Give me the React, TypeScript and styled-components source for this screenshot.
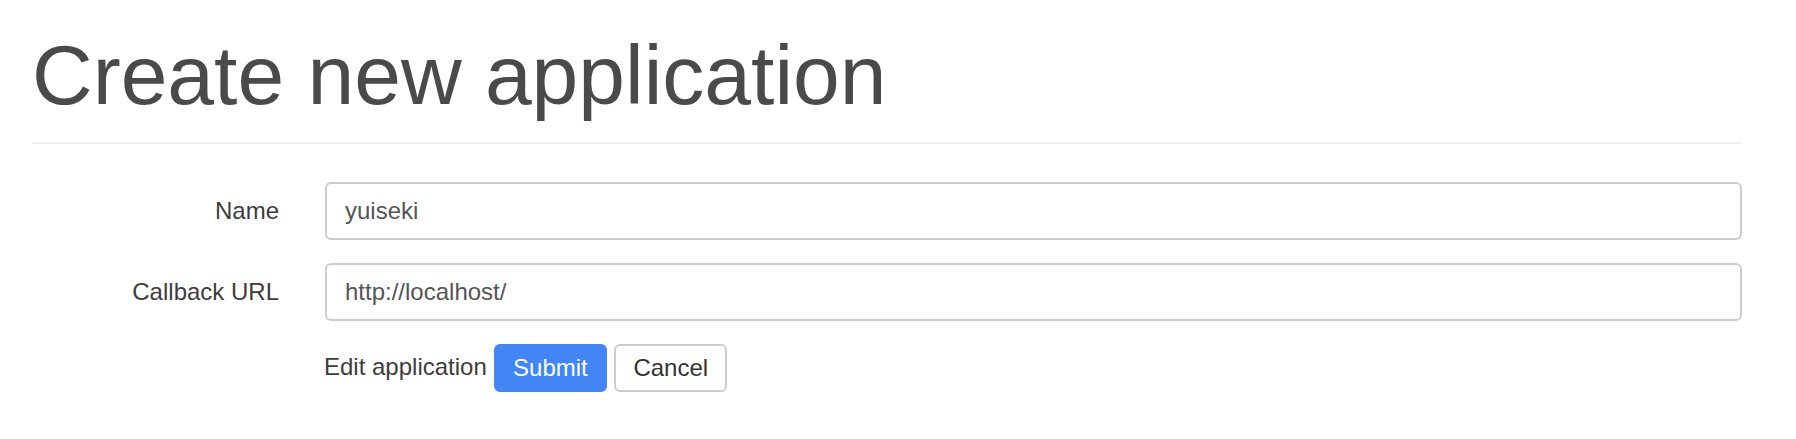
import styled, { createGlobalStyle } from 'styled-components'

const GlobalStyle = createGlobalStyle`
  html, body {
    margin: 0;
    padding: 0;
    background: #fff;
  }
  body {
    font-family: "Liberation Sans", Arial, sans-serif;
    color: #333;
  }
`;

const Page = styled.div`
  padding: 29px 54px 0 32px;
`;

const Header = styled.div`
  padding-bottom: 21px;
  border-bottom: 2px solid #eee;
`;

const Title = styled.h1`
  margin: 0;
  font-size: 84px;
  line-height: 92px;
  font-weight: 400;
  color: #4a4a4a;
`;

const Form = styled.form`
  margin-top: 38px;
  display: flex;
  flex-direction: column;
  gap: 23.5px;
`;

const Row = styled.div`
  display: grid;
  grid-template-columns: 247px 1fr;
  column-gap: 46px;
  align-items: center;
`;

const Label = styled.label`
  text-align: right;
  font-size: 24px;
  color: #3d3d3d;
`;

const Input = styled.input`
  box-sizing: border-box;
  width: 100%;
  height: 57.5px;
  padding: 0 18px;
  border: 2px solid #ccc;
  border-radius: 6px;
  font-family: inherit;
  font-size: 24px;
  color: #555;
  background: #fff;
  outline: none;
`;

const Actions = styled.div`
  grid-column: 2;
  display: flex;
  align-items: center;
  gap: 7px;
`;

const Note = styled.span`
  font-size: 24px;
  color: #3d3d3d;
  margin: 0 0 3px -1px;
`;

const Button = styled.button<{ $primary?: boolean }>`
  box-sizing: border-box;
  height: 48.4px;
  padding: 0 17.3px;
  border: 2px solid ${p => (p.$primary ? '#4285f4' : '#ccc')};
  border-radius: 6px;
  background: ${p => (p.$primary ? '#4285f4' : '#fff')};
  color: ${p => (p.$primary ? '#fff' : '#333')};
  font-family: inherit;
  font-size: 24px;
  cursor: pointer;
`;

function App() {
  return (
    <Page>
      <GlobalStyle />
      <Header>
        <Title>Create new application</Title>
      </Header>
      <Form onSubmit={e => e.preventDefault()}>
        <Row>
          <Label htmlFor="app-name">Name</Label>
          <Input id="app-name" defaultValue="yuiseki" />
        </Row>
        <Row>
          <Label htmlFor="app-callback">Callback URL</Label>
          <Input id="app-callback" defaultValue="http://localhost/" />
        </Row>
        <Row>
          <Actions>
            <Note>Edit application</Note>
            <Button type="submit" $primary>Submit</Button>
            <Button type="button">Cancel</Button>
          </Actions>
        </Row>
      </Form>
    </Page>
  )
}

export default App;
